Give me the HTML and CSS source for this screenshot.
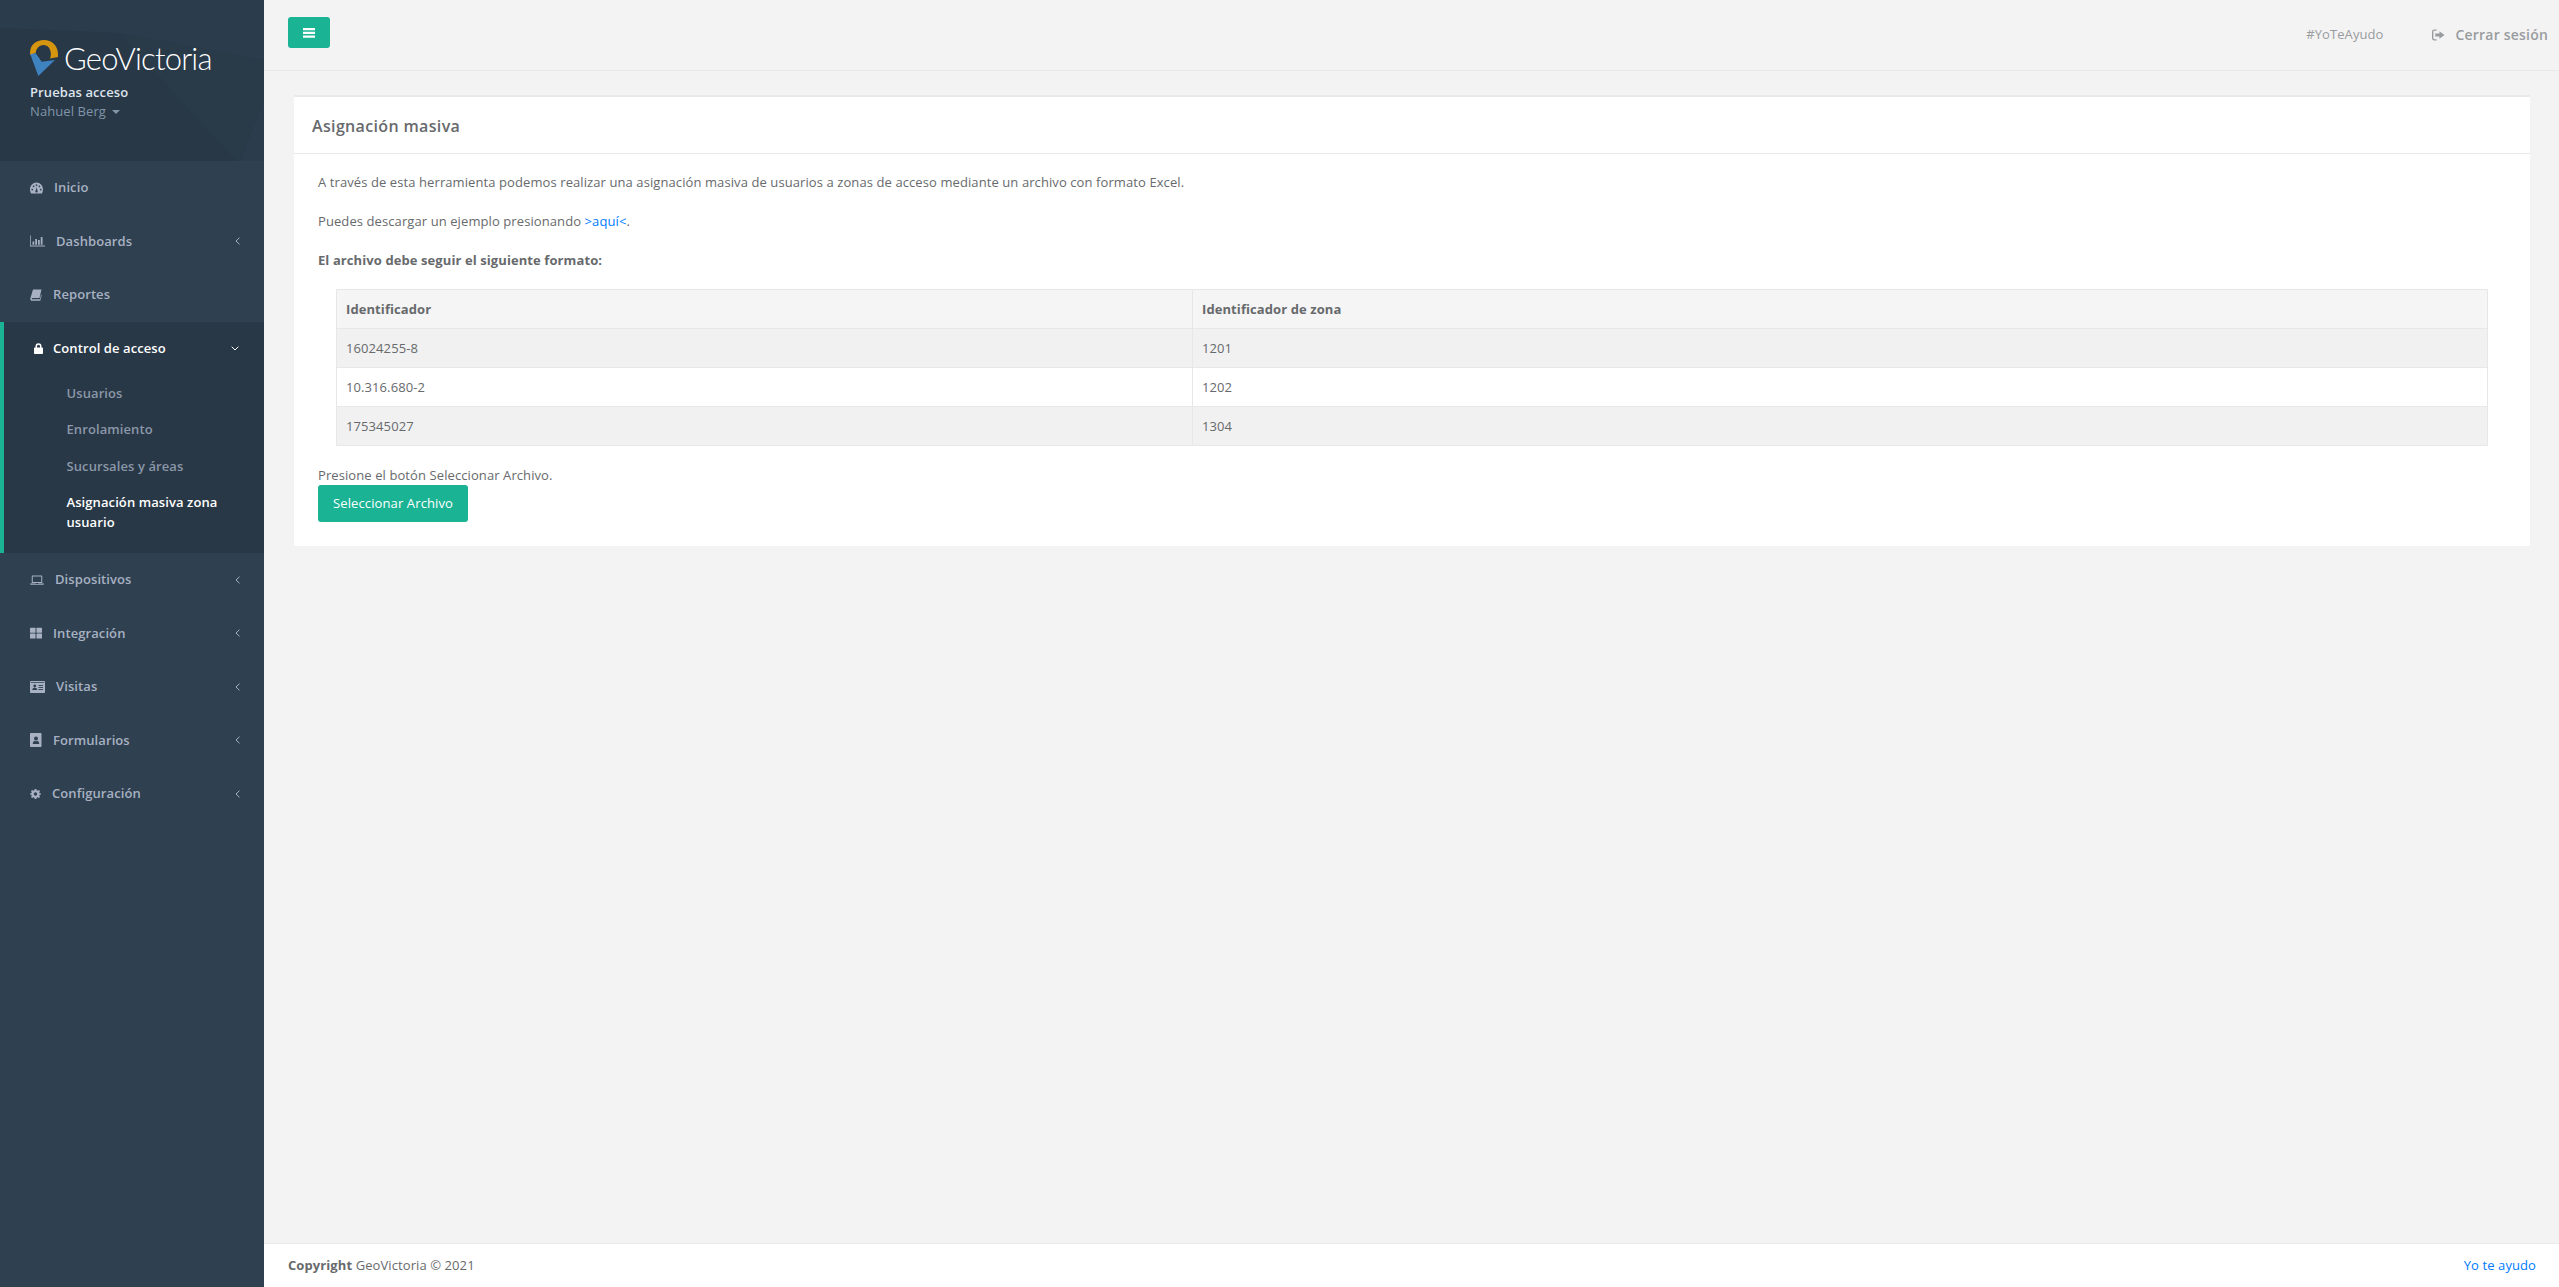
FILE: index.html
```html
<!DOCTYPE html>
<html lang="es">
<head>
<meta charset="utf-8">
<title>GeoVictoria</title>
<link rel="stylesheet" href="styles.css">
</head>
<body>
<div class="app">
  <aside class="sidebar">
    <div class="profile">
      <div class="logo">
        <svg class="logo-mark" viewBox="0 0 28 37" width="28" height="37">
          <path d="M0 13C0 5 6 0 14 0c8 0 14 6 14 14v3l-8 1.500c2-3.500 1-13.500-6.500-13.500C9 5 6 9 5.700 13L0 15z" fill="#d6950f"/>
          <path d="M.3 14.300l5.400-1 6 8.400L25 20 8.300 36z" fill="#3f82c0"/>
        </svg>
        <span class="logo-text">GeoVictoria</span>
      </div>
      <div class="company">Pruebas acceso</div>
      <div class="user">Nahuel Berg <span class="caret"></span></div>
    </div>
    <nav>
      <ul class="menu">
        <li><a class="item"><svg class="ic w13" viewBox="0 0 26 22"><path fill-rule="evenodd" d="M13 0C6 0 0 6 0 14c0 3 .7 5.500 2 8h22c1.300-2.500 2-5 2-8C26 6 20 0 13 0zM4.500 16a1.800 1.800 0 1 1 0-3.600 1.800 1.800 0 0 1 0 3.600zm2.700-6.500a1.800 1.800 0 1 1 0-3.600 1.800 1.800 0 0 1 0 3.600zM13 7a1.800 1.800 0 1 1 0-3.600A1.800 1.800 0 0 1 13 7zm5.800 2.500a1.800 1.800 0 1 1 0-3.600 1.800 1.800 0 0 1 0 3.600zm2.700 6.500a1.800 1.800 0 1 1 0-3.600 1.800 1.800 0 0 1 0 3.600zM13 20a2.500 2.500 0 0 1-1.300-4.600L13.500 9l1 6.500A2.500 2.500 0 0 1 13 20z"/></svg><span class="label">Inicio</span></a></li>
        <li><a class="item"><svg class="ic w15" viewBox="0 0 30 22"><path d="M0 0h1.500v20H30v2H0z"/><rect x="5" y="12" width="3.500" height="6.500"/><rect x="10.500" y="7" width="3.500" height="11.500"/><rect x="16" y="9" width="3.500" height="9.500"/><rect x="21.500" y="3" width="3.500" height="15.500"/></svg><span class="label">Dashboards</span><svg class="arrow" viewBox="0 0 5 8"><path d="M4.500.7L1 4l3.500 3.300" fill="none" stroke="currentColor" stroke-width="1"/></svg></a></li>
        <li><a class="item"><svg class="ic w12" viewBox="0 0 24 24"><path d="M6 1h17l-4 17H4.500c-1 0-1.500 2.500 0 2.500H20l2-9 1.500 1-3 11H3.500C1.500 23.500 0 21 .8 18.500z"/></svg><span class="label">Reportes</span></a></li>
        <li class="active">
          <a class="item head"><svg class="ic lock" viewBox="0 0 18 22"><path fill-rule="evenodd" d="M3 9V6.500a6 6 0 0 1 12 0V9h1.500c.8 0 1.500.7 1.500 1.500v10c0 .8-.7 1.500-1.500 1.500h-15C.7 22 0 21.300 0 20.500v-10C0 9.700.7 9 1.500 9zm3 0h6V6.500a3 3 0 0 0-6 0z"/></svg><span class="label llock">Control de acceso</span><svg class="arrow down" viewBox="0 0 8 5"><path d="M.7.7L4 4 7.300.7" fill="none" stroke="currentColor" stroke-width="1"/></svg></a>
          <ul class="sub">
            <li><a>Usuarios</a></li>
            <li><a>Enrolamiento</a></li>
            <li><a>Sucursales y áreas</a></li>
            <li class="current"><a>Asignación masiva zona usuario</a></li>
          </ul>
        </li>
        <li><a class="item"><svg class="ic w14" viewBox="0 0 28 20"><path fill-rule="evenodd" d="M5 1h18c1 0 1.500.7 1.500 1.500V16h-21V2.500C3.500 1.700 4 1 5 1zm.5 2v11h17V3z"/><path d="M0 17h11l1 1h4l1-1h11c0 1.500-1 2.500-2.500 2.500h-23C1 19.500 0 18.500 0 17z"/></svg><span class="label">Dispositivos</span><svg class="arrow" viewBox="0 0 5 8"><path d="M4.500.7L1 4l3.500 3.300" fill="none" stroke="currentColor" stroke-width="1"/></svg></a></li>
        <li><a class="item"><svg class="ic w12" viewBox="0 0 24 22"><rect width="11" height="10" y="0.500" rx="1"/><rect x="13" y="0.500" width="11" height="10" rx="1"/><rect y="12" width="11" height="10" rx="1"/><rect x="13" y="12" width="11" height="10" rx="1"/></svg><span class="label">Integración</span><svg class="arrow" viewBox="0 0 5 8"><path d="M4.500.7L1 4l3.500 3.300" fill="none" stroke="currentColor" stroke-width="1"/></svg></a></li>
        <li><a class="item"><svg class="ic w15" viewBox="0 0 30 24"><rect width="30" height="24" rx="1.500"/><g fill="#2f4050"><rect x="1.500" y="2.500" width="27" height="1.500"/><circle cx="9.500" cy="10" r="2.800"/><path d="M4.500 18c0-3 2-4.500 5-4.500s5 1.500 5 4.500z"/><rect x="17" y="8" width="9" height="1.800"/><rect x="17" y="12" width="9" height="1.800"/><rect x="17" y="16" width="9" height="1.800"/></g></svg><span class="label">Visitas</span><svg class="arrow" viewBox="0 0 5 8"><path d="M4.500.7L1 4l3.500 3.300" fill="none" stroke="currentColor" stroke-width="1"/></svg></a></li>
        <li><a class="item"><svg class="ic w12 tall" viewBox="0 0 24 28"><path fill-rule="evenodd" d="M2 0h19c1.200 0 2 .8 2 2v24c0 1.200-.8 2-2 2H2c-1.200 0-2-.8-2-2V2C0 .8.800 0 2 0zm10 7a4 4 0 1 0 0 8 4 4 0 0 0 0-8zm-6.500 15h13c0-4-2-6.500-4-6.500-1 .7-1.700 1-2.500 1s-1.500-.3-2.500-1c-2 0-4 2.500-4 6.500z"/></svg><span class="label">Formularios</span><svg class="arrow" viewBox="0 0 5 8"><path d="M4.500.7L1 4l3.500 3.300" fill="none" stroke="currentColor" stroke-width="1"/></svg></a></li>
        <li><a class="item"><svg class="ic w11" viewBox="-1 0 26 24"><path fill-rule="evenodd" d="M10 0h4l.7 3.300 2.300 1L20 2.400 22.700 5l-1.900 3 1 2.300 3.200.7v2l-3.200.7-1 2.300 1.900 3-2.700 2.600-3-1.900-2.300 1L14 24h-4l-.7-3.300-2.300-1-3 1.900L1.300 19l1.900-3-1-2.300L-1 13v-2l3.200-.7 1-2.300-1.900-3L4 2.400l3 1.900 2.300-1zM12 8a4 4 0 1 0 0 8 4 4 0 0 0 0-8z"/></svg><span class="label">Configuración</span><svg class="arrow" viewBox="0 0 5 8"><path d="M4.500.7L1 4l3.500 3.300" fill="none" stroke="currentColor" stroke-width="1"/></svg></a></li>
      </ul>
    </nav>
  </aside>
  <div class="main">
    <header class="topbar">
      <button class="toggle" type="button" aria-label="Menú">
        <svg viewBox="0 0 12 10" width="12" height="10"><path d="M0 0h12v2.200H0zM0 3.800h12V6H0zM0 7.600h12v2.200H0z" fill="#fff"/></svg>
      </button>
      <div class="top-links">
        <span class="help">#YoTeAyudo</span>
        <span class="logout"><svg viewBox="0 0 14 12" width="13" height="12"><path d="M5 0v1.500H2.500c-.6 0-1 .4-1 1v7c0 .6.400 1 1 1H5V12H2.500A2.500 2.500 0 0 1 0 9.500v-7A2.500 2.500 0 0 1 2.500 0zM8 2l5.500 4L8 10V7.700H3.500V4.300H8z" fill="currentColor"/></svg>Cerrar sesión</span>
      </div>
    </header>
    <main class="content">
      <section class="card">
        <h5 class="card-title">Asignación masiva</h5>
        <div class="card-body">
          <p>A través de esta herramienta podemos realizar una asignación masiva de usuarios a zonas de acceso mediante un archivo con formato Excel.</p>
          <p>Puedes descargar un ejemplo presionando <a class="link">&gt;aquí&lt;</a>.</p>
          <p class="strong">El archivo debe seguir el siguiente formato:</p>
          <table class="format">
            <thead><tr><th class="col1">Identificador</th><th>Identificador de zona</th></tr></thead>
            <tbody>
              <tr><td>16024255-8</td><td>1201</td></tr>
              <tr><td>10.316.680-2</td><td>1202</td></tr>
              <tr><td>175345027</td><td>1304</td></tr>
            </tbody>
          </table>
          <div class="press">Presione el botón Seleccionar Archivo.</div>
          <button class="primary" type="button">Seleccionar Archivo</button>
        </div>
      </section>
    </main>
    <footer class="footer">
      <span><b>Copyright</b> GeoVictoria © 2021</span>
      <a class="link">Yo te ayudo</a>
    </footer>
  </div>
</div>
</body>
</html>
```
FILE: styles.css
```css
* { box-sizing: border-box; }
html, body { margin: 0; height: 100%; }
body {
  font-family: "Open Sans", "Liberation Sans", sans-serif;
  font-size: 13px;
  line-height: 19.5px;
  letter-spacing: .09px;
  color: #676a6c;
  background: #f3f3f4;
}
.app { display: flex; min-height: 1287px; }
.sidebar { width: 264px; flex: none; background: #2f4050; }
.profile {
  position: relative;
  isolation: isolate;
  height: 161px;
  padding: 40px 0 0 30px;
  background-color: #2b3c4c;
}
.profile::before {
  content: "";
  position: absolute;
  inset: 0;
  z-index: -1;
  background: #283847;
  clip-path: polygon(0 28px, 120px 33px, 236px 161px, 0 161px);
}
.profile::after {
  content: "";
  position: absolute;
  inset: 0;
  z-index: -1;
  background: #293a49;
  clip-path: polygon(120px 33px, 264px 60px, 264px 100px, 240px 161px, 236px 161px);
}
.logo { display: flex; align-items: flex-start; height: 37px; }
.logo-mark { flex: none; }
.logo-text {
  margin: 0 0 0 6px;
  font-family: Lato, "Open Sans", sans-serif;
  font-weight: 300;
  font-size: 31px;
  line-height: 36px;
  letter-spacing: -.8px;
  color: #fff;
}
.company { margin-top: 6px; font-weight: 600; color: #dfe4ed; }
.user { color: #8095a8; margin-top: -1px; }
.caret {
  display: inline-block;
  margin-left: 3px;
  vertical-align: middle;
  border-top: 4px solid #8095a8;
  border-left: 4px solid transparent;
  border-right: 4px solid transparent;
}
.menu, .sub { list-style: none; margin: 0; padding: 0; }
.item {
  display: flex;
  align-items: center;
  height: 53.5px;
  padding: 0 24px 0 30px;
  font-weight: 600;
  color: #a7b1c2;
}
.ic { flex: none; fill: currentColor; height: 12px; }
.w15 { width: 15px; }
.w14 { width: 14px; }
.w13 { width: 13px; }
.w12 { width: 12px; }
.w11 { width: 11px; }
.tall { height: 14px; }
.label { margin-left: 11px; }
.arrow { width: 5px; height: 8px; margin-left: auto; }
.arrow.down { width: 8px; height: 5px; margin-right: 1px; }
.active {
  background: #293846;
  border-left: 4px solid #1ab394;
  padding-bottom: 12.5px;
}
.active .head { color: #fff; }
.active .lock { width: 9px; height: 11px; }
.llock { margin-left: 10px; }
.sub a { display: block; padding: 8.5px 24px 8.5px 62.5px; color: #8a97a9; font-weight: 600; }
.sub li.current a { color: #fff; }
.topbar {
  display: flex;
  justify-content: space-between;
  height: 71px;
  border-bottom: 1px solid #e7eaec;
  padding: 17px 11px 0 24px;
}
.main { flex: 1; min-width: 0; display: flex; flex-direction: column; }
.toggle {
  width: 42px;
  height: 31px;
  padding: 0;
  display: flex;
  align-items: center;
  justify-content: center;
  border: 0;
  border-radius: 3px;
  background: #1ab394;
}
.top-links { display: flex; align-items: center; height: 36px; color: #999c9e; }
.help { margin-right: 48px; }
.logout { display: flex; align-items: center; font-size: 14px; font-weight: 600; letter-spacing: .2px; }
.logout svg { margin-right: 11px; }
.content { flex: 1; padding: 24px 29px 0 30px; }
.card { background: #fff; border-top: 2px solid #e7eaec; }
.card-title {
  margin: 0;
  height: 57px;
  padding: 3px 18px 0;
  display: flex;
  align-items: center;
  font-size: 16px;
  font-weight: 600;
  letter-spacing: .35px;
  border-bottom: 1px solid #e7eaec;
}
.card-body { padding: 19px 25px 24px 24px; }
p { margin: 0 0 19.5px; }
.strong { font-weight: 700; margin-bottom: 18.5px; }
.link { color: #007bff; }
.format {
  width: 2152px;
  margin-left: 18px;
  border-collapse: collapse;
  table-layout: fixed;
}
.format th, .format td {
  border: 1px solid #e7e7e7;
  padding: 10px 9px 8px;
  text-align: left;
  height: 39px;
}
.format th { background: #f5f5f6; font-weight: 700; }
.col1 { width: 856px; }
.format tbody tr:nth-child(odd) td { background: #f1f1f1; }
.press { margin-top: 20px; line-height: 19px; }
.primary {
  display: block;
  width: 150px;
  height: 37px;
  padding: 0;
  border: 0;
  border-radius: 3px;
  background: #1ab394;
  color: #fff;
  font: 13px/19.5px "Open Sans", sans-serif;
  letter-spacing: .12px;
}
.footer {
  display: flex;
  justify-content: space-between;
  align-items: center;
  height: 44px;
  padding: 0 23px 0 24px;
  background: #fff;
  border-top: 1px solid #e7eaec;
}
```
